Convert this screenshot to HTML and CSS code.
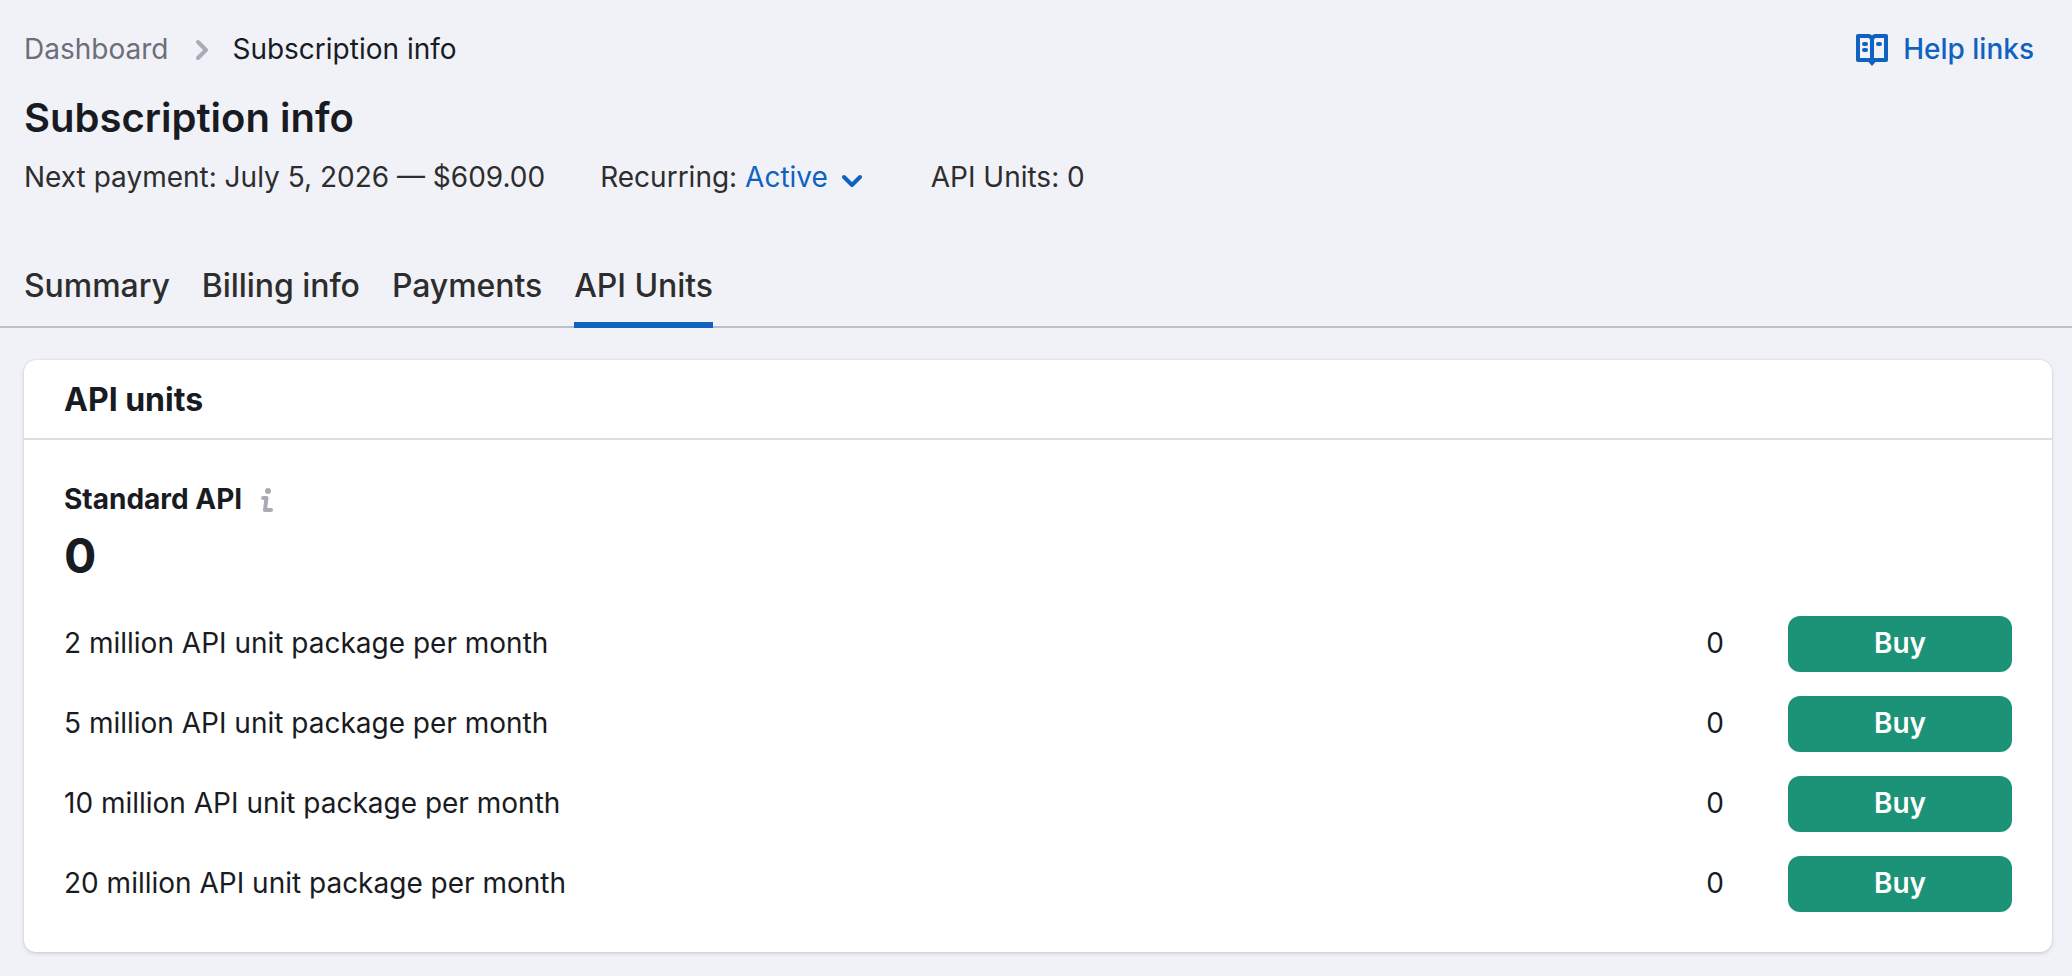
FILE: index.html
```html
<!DOCTYPE html>
<html lang="en">
<head>
    <meta charset="UTF-8">
    <meta name="viewport" content="width=device-width, initial-scale=1.0">
    <title>Subscription info</title>
    <link rel="stylesheet" href="styles.css">
</head>
<body>
    <header class="page-header">
        <div class="top-bar">
            <nav class="breadcrumbs">
                <a class="crumb" href="#">Dashboard</a>
                <svg class="crumb-arrow" width="14" height="24" viewBox="0 0 14 24" fill="none" stroke="currentColor" stroke-width="4" stroke-linecap="round" stroke-linejoin="round">
                    <path d="M3 4l8 8-8 8"/>
                </svg>
                <span class="crumb current">Subscription info</span>
            </nav>
            <a class="help-link" href="#">
                <svg class="help-icon" width="32" height="32" viewBox="0 0 32 32" fill="currentColor">
                    <path fill-rule="evenodd" d="M2 0h11q2 0 3 1.500Q17 0 19 0h11q2 0 2 2v24q0 2-2 2H19.500L16 32l-3.500-4H2q-2 0-2-2V2q0-2 2-2zM4 4v20h10V6q0-2-2-2zM20 4q-2 0-2 2v18h10V4z"/>
                    <rect x="6" y="8" width="6" height="4" rx="2"/>
                    <rect x="6" y="14" width="6" height="4" rx="2"/>
                    <rect x="20" y="8" width="6" height="4" rx="2"/>
                </svg>
                <span>Help links</span>
            </a>
        </div>
        <h1 class="title">Subscription info</h1>
        <div class="info">
            <span>Next payment: July 5, 2026 — $609.00</span>
            <span class="recurring">Recurring:
                <a class="status" href="#">Active
                    <svg class="status-arrow" width="20" height="14" viewBox="0 0 20 14" fill="none" stroke="currentColor" stroke-width="4" stroke-linecap="round" stroke-linejoin="round">
                        <path d="M2 4l8 8 8-8"/>
                    </svg>
                </a>
            </span>
            <span>API Units: 0</span>
        </div>
    </header>

    <nav class="tabs">
        <a class="tab" href="#">Summary</a>
        <a class="tab" href="#">Billing info</a>
        <a class="tab" href="#">Payments</a>
        <a class="tab active" href="#">API Units</a>
    </nav>

    <main class="card">
        <h2 class="card-title">API units</h2>
        <div class="card-body">
            <div class="standard">
                <span>Standard API</span>
                <svg class="info-icon" width="12" height="24" viewBox="0 0 12 24" fill="none" stroke="currentColor" stroke-width="4" stroke-linecap="round" stroke-linejoin="round">
                    <path d="M2 10h3.500L4 22h6"/>
                    <circle cx="7" cy="3" r="3" fill="currentColor" stroke="none"/>
                </svg>
            </div>
            <div class="total">0</div>
            <div class="packages">
                <div class="package">
                    <span class="package-name">2 million API unit package per month</span>
                    <span class="count">0</span>
                    <button class="buy">Buy</button>
                </div>
                <div class="package">
                    <span class="package-name">5 million API unit package per month</span>
                    <span class="count">0</span>
                    <button class="buy">Buy</button>
                </div>
                <div class="package">
                    <span class="package-name">10 million API unit package per month</span>
                    <span class="count">0</span>
                    <button class="buy">Buy</button>
                </div>
                <div class="package">
                    <span class="package-name">20 million API unit package per month</span>
                    <span class="count">0</span>
                    <button class="buy">Buy</button>
                </div>
            </div>
        </div>
    </main>
</body>
</html>
```

FILE: styles.css
```css
* {
    box-sizing: border-box;
}

body {
    margin: 0;
    min-height: 976px;
    background-color: #f1f2f8;
    color: #191b23;
    font-family: Inter, sans-serif;
    font-size: 28px;
    line-height: 40px;
}

a {
    color: inherit;
    text-decoration: none;
}

svg {
    flex-shrink: 0;
}

/* Header */
.page-header {
    padding: 29px 38px 0 24px;
}

.top-bar {
    display: flex;
    justify-content: space-between;
}

.breadcrumbs {
    display: flex;
    align-items: center;
    color: #6c6e79;
}

.crumb-arrow {
    margin: 2px 23px 0 27px;
    color: #a9abb6;
}

.current {
    color: #191b23;
}

.help-link {
    display: flex;
    align-items: center;
    gap: 15px;
    color: #0f62c0;
    font-weight: 500;
}

.help-icon {
    margin-top: 2px;
}

.title {
    margin: 25px 0 15px;
    font-size: 40px;
    line-height: 48px;
    font-weight: 600;
}

.info {
    display: flex;
    color: #2d2d2d;
}

.recurring {
    margin: 0 69px 0 55px;
}

.status {
    color: #0f62c0;
}

.status-arrow {
    margin-left: 6px;
}

/* Tabs */
.tabs {
    display: flex;
    gap: 32px;
    height: 79px;
    margin-top: 52px;
    padding-left: 24px;
    border-bottom: 2px solid #bbbfca;
}

.tab {
    height: 79px;
    padding-top: 17px;
    color: #2d2d2d;
    font-size: 32px;
    font-weight: 500;
    letter-spacing: -0.06px;
}

.active {
    border-bottom: 6px solid #0f62c0;
}

/* Card */
.card {
    margin: 32px 20px 0 24px;
    height: 592px;
    background-color: #fff;
    border-radius: 12px;
    box-shadow: 0 0 2px rgba(25, 27, 35, 0.16), 0 2px 4px rgba(25, 27, 35, 0.12);
}

.card-title {
    height: 80px;
    margin: 0;
    padding: 20px 40px 18px;
    border-bottom: 2px solid #dcdde6;
    font-size: 32px;
    font-weight: 700;
}

.card-body {
    padding: 39px 40px 40px;
}

.standard {
    display: flex;
    align-items: center;
    gap: 19px;
    font-weight: 700;
}

.info-icon {
    margin-top: 2px;
    color: #a9abb6;
}

.total {
    margin-top: 9px;
    font-size: 48px;
    line-height: 56px;
    font-weight: 700;
}

.packages {
    display: flex;
    flex-direction: column;
    gap: 24px;
    margin-top: 32px;
}

.package {
    display: flex;
    align-items: center;
    height: 56px;
}

.package-name {
    flex-grow: 1;
    padding-bottom: 2px;
}

.count {
    margin-right: 64px;
    padding-bottom: 2px;
}

.buy {
    width: 224px;
    height: 56px;
    padding: 0 0 2px;
    border: none;
    border-radius: 12px;
    background-color: #1c9376;
    color: #fff;
    font: 600 28px/40px Inter, sans-serif;
}
```
